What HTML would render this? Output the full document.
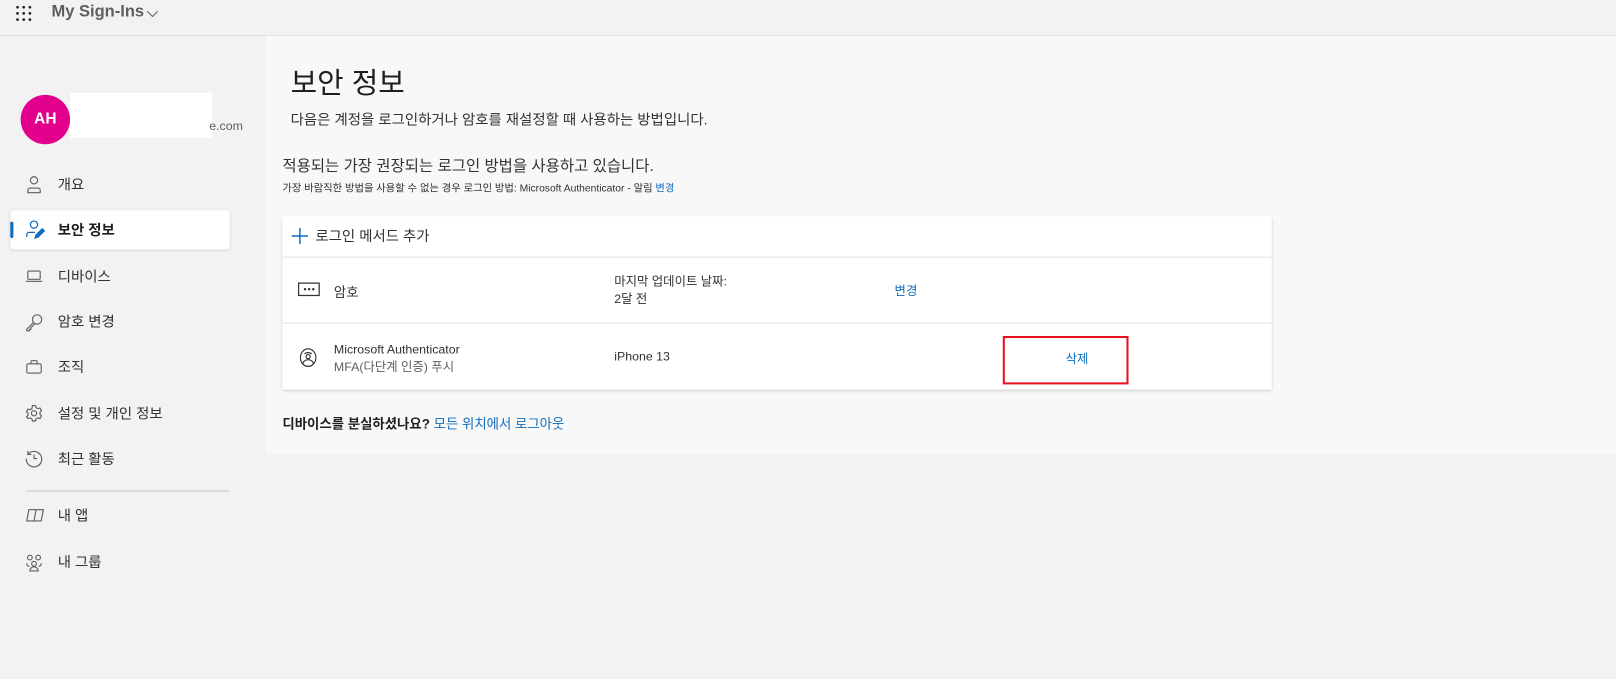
<!DOCTYPE html>
<html><head><meta charset="utf-8"><style>
*{margin:0;padding:0;box-sizing:border-box}
html,body{width:1616px;height:679px;overflow:hidden;background:#f2f2f2}
#w{position:absolute;left:0;top:0;width:1568px;height:659px;transform:scale(1.0306);transform-origin:0 0;font-family:"Segoe UI","Liberation Sans","Noto Sans CJK KR",sans-serif;color:#323130;font-size:13px}
.top{position:absolute;left:0;top:0;width:1568px;height:35px;background:#f3f2f1;border-bottom:1px solid #e1dfdd}
.abs{position:absolute;white-space:nowrap}
.panel{position:absolute;left:258px;top:35px;width:1310px;height:405px;background:#f8f8f8}
.nav{position:absolute;left:56px;font-size:14px;color:#323130}
.ic{position:absolute;left:24px}
.card{position:absolute;left:274px;top:210px;width:960px;height:168px;background:#fff;box-shadow:0 1.5px 3px rgba(0,0,0,.18)}
.hr{position:absolute;left:0;width:960px;height:1px;background:#e1e1e1}
.link{color:#0f6cbd}
</style></head><body><div id="w">
<div class="top"></div>
<svg class="abs" style="left:15px;top:5px" width="16" height="16" viewBox="0 0 16 16" fill="#201f1e"><circle cx="2" cy="2" r="1.3"/><circle cx="8" cy="2" r="1.3"/><circle cx="14" cy="2" r="1.3"/><circle cx="2" cy="8" r="1.3"/><circle cx="8" cy="8" r="1.3"/><circle cx="14" cy="8" r="1.3"/><circle cx="2" cy="14" r="1.3"/><circle cx="8" cy="14" r="1.3"/><circle cx="14" cy="14" r="1.3"/></svg>
<div class="abs" style="left:50px;top:3px;font-size:16px;font-weight:600;color:#605e5c">My Sign-Ins</div>
<svg class="abs" style="left:141px;top:9px" width="14" height="10" viewBox="0 0 14 10"><path d="M2 2l5 5 5-5" stroke="#605e5c" fill="none" stroke-width="1"/></svg>

<div class="abs" style="left:20px;top:92px;width:48px;height:48px;border-radius:50%;background:#e3008c;color:#fff;font-weight:700;font-size:15px;text-align:center;line-height:48px">AH</div>
<div class="abs" style="left:68px;top:90px;width:138px;height:44px;background:#fff"></div>
<div class="abs" style="left:203px;top:115px;font-size:12px;color:#605e5c">e.com</div>

<svg class="ic" style="top:170px" width="18" height="18" viewBox="0 0 18 18" fill="none" stroke="#605e5c" stroke-width="1.1"><circle cx="9" cy="5" r="3.5"/><path d="M3 17v-2.5a2 2 0 0 1 2-2h8a2 2 0 0 1 2 2V17z"/></svg>
<div class="nav" style="top:169px">개요</div>

<div class="abs" style="left:10px;top:204px;width:213px;height:38px;background:#fff;border-radius:4px;box-shadow:0 1px 3px rgba(0,0,0,.12)"></div>
<div class="abs" style="left:10px;top:215px;width:3px;height:16px;background:#0f6cbd;border-radius:2px"></div>
<svg class="ic" style="top:213px" width="20" height="20" viewBox="0 0 20 20" fill="none" stroke="#0f6cbd" stroke-width="1.2"><circle cx="9" cy="5" r="3.5"/><path d="M2 17v-2.5a2 2 0 0 1 2-2h6"/><path d="M10 18l1-3 6-6 2 2-6 6z" fill="#0f6cbd"/></svg>
<div class="nav" style="top:213px;font-weight:700;color:#201f1e">보안 정보</div>

<svg class="ic" style="top:260px" width="18" height="16" viewBox="0 0 18 16" fill="none" stroke="#605e5c" stroke-width="1.1"><rect x="3" y="3" width="12" height="8" rx="1"/><path d="M1 13h16"/></svg>
<div class="nav" style="top:258px">디바이스</div>

<svg class="ic" style="top:304px" width="18" height="18" viewBox="0 0 18 18" fill="none" stroke="#605e5c" stroke-width="1.1"><circle cx="12" cy="6" r="4.5"/><path d="M8.5 9L2 15.5V17h2.5v-1.5H6V14l3.5-3.5"/></svg>
<div class="nav" style="top:302px">암호 변경</div>

<svg class="ic" style="top:348px" width="18" height="16" viewBox="0 0 18 16" fill="none" stroke="#605e5c" stroke-width="1.1"><rect x="2" y="5" width="14" height="9" rx="1.5"/><path d="M6 5V3a1 1 0 0 1 1-1h4a1 1 0 0 1 1 1v2"/></svg>
<div class="nav" style="top:346px">조직</div>

<svg class="ic" style="top:392px" width="18" height="18" viewBox="0 0 18 18" fill="none" stroke="#605e5c" stroke-width="1.1"><circle cx="9" cy="9" r="2.5"/><path d="M7.5 1.5h3l.5 2 1.8 1 2-.6 1.5 2.6-1.5 1.5v2l1.5 1.5-1.5 2.6-2-.6-1.8 1-.5 2h-3l-.5-2-1.8-1-2 .6L1.7 12.5 3.2 11V9L1.7 7.5 3.2 4.9l2 .6 1.8-1z"/></svg>
<div class="nav" style="top:391px">설정 및 개인 정보</div>

<svg class="ic" style="top:436px" width="18" height="18" viewBox="0 0 18 18" fill="none" stroke="#605e5c" stroke-width="1.1"><path d="M3 5A7.5 7.5 0 1 1 1.5 9"/><path d="M3 1.5V5h3.5"/><path d="M9 5v4h3"/></svg>
<div class="nav" style="top:435px">최근 활동</div>

<div class="abs" style="left:26px;top:476px;width:196px;height:1px;background:#c8c6c4"></div>

<svg class="ic" style="top:493px" width="20" height="14" viewBox="0 0 20 14" fill="none" stroke="#605e5c" stroke-width="1.1"><path d="M4 1.5h14l-2 11H2z"/><path d="M11 1.5l-2 11"/></svg>
<div class="nav" style="top:490px">내 앱</div>

<svg class="ic" style="top:537px" width="18" height="18" viewBox="0 0 18 18" fill="none" stroke="#605e5c" stroke-width="1.1"><circle cx="5" cy="4" r="2.3"/><circle cx="13" cy="4" r="2.3"/><circle cx="9" cy="10" r="2.3"/><path d="M2 9.5a2.5 2.5 0 0 0 2.5 3M16 9.5a2.5 2.5 0 0 1-2.5 3M5 17a4 4 0 0 1 8 0z"/></svg>
<div class="nav" style="top:535px">내 그룹</div>

<div class="panel"></div>
<div class="abs" style="left:282px;top:59px;font-size:28px;color:#201f1e">보안 정보</div>
<div class="abs" style="left:282px;top:106px;font-size:14px">다음은 계정을 로그인하거나 암호를 재설정할 때 사용하는 방법입니다.</div>
<div class="abs" style="left:274px;top:150px;font-size:15px">적용되는 가장 권장되는 로그인 방법을 사용하고 있습니다.</div>
<div class="abs" style="left:274px;top:174px;font-size:10px">가장 바람직한 방법을 사용할 수 없는 경우 로그인 방법: Microsoft Authenticator - 알림 <span class="link">변경</span></div>

<div class="card">
<svg class="abs" style="left:9px;top:11px" width="16" height="16" viewBox="0 0 16 16" stroke="#0f6cbd" stroke-width="1.4"><path d="M8 0v16M0 8h16"/></svg>
<div class="abs" style="left:32px;top:9px;font-size:14px">로그인 메서드 추가</div>
<div class="hr" style="top:39px"></div>
<svg class="abs" style="left:15px;top:64px" width="22" height="14" viewBox="0 0 22 14"><rect x="0.7" y="0.7" width="20" height="12" fill="none" stroke="#323130" stroke-width="1.2"/><circle cx="7" cy="6.7" r="1.2" fill="#323130"/><circle cx="11" cy="6.7" r="1.2" fill="#323130"/><circle cx="15" cy="6.7" r="1.2" fill="#323130"/></svg>
<div class="abs" style="left:50px;top:63px;font-size:13px">암호</div>
<div class="abs" style="left:322px;top:55px;font-size:12px;line-height:17px">마지막 업데이트 날짜:<br>2달 전</div>
<div class="abs link" style="left:594px;top:63px;font-size:12px">변경</div>
<div class="hr" style="top:103px"></div>
<svg class="abs" style="left:16px;top:127px" width="18" height="20" viewBox="0 0 18 20" fill="none" stroke="#323130" stroke-width="1.1"><ellipse cx="9" cy="10" rx="7.5" ry="8.5"/><circle cx="9" cy="9" r="2"/><path d="M4 16a5 4 0 0 1 10 0M5.5 6.5a5 5 0 0 1 7 0"/></svg>
<div class="abs" style="left:50px;top:121px;font-size:12px;line-height:17px">Microsoft Authenticator<br><span style="color:#605e5c">MFA(다단계 인증) 푸시</span></div>
<div class="abs" style="left:322px;top:129px;font-size:12px">iPhone 13</div>
<div class="abs" style="left:699px;top:116px;width:122px;height:47px;border:2px solid #e81123"></div>
<div class="abs link" style="left:760px;top:129px;font-size:12px">삭제</div>
</div>

<div class="abs" style="left:274px;top:401px;font-size:13px"><b style="color:#201f1e">디바이스를 분실하셨나요?</b> <span class="link">모든 위치에서 로그아웃</span></div>
</div></body></html>
